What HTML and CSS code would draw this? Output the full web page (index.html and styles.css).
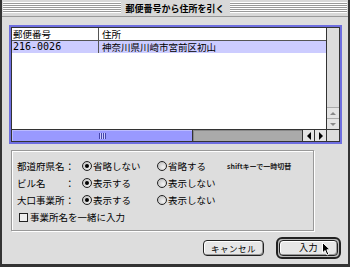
FILE: index.html
```html
<!DOCTYPE html>
<html lang="ja">
<head>
<meta charset="utf-8">
<link rel="stylesheet" href="styles.css">
</head>
<body>
<div class="window">
  <div class="titlebar">
    <div class="stripes"></div>
    <div class="title">郵便番号から住所を引く</div>
    <div class="stripes"></div>
  </div>
  <div class="body">
    <div class="list">
      <div class="list-inner">
        <div class="table">
          <div class="row head"><div class="c1">郵便番号</div><div class="c2">住所</div></div>
          <div class="row sel"><div class="c1 mono">216-0026</div><div class="c2">神奈川県川崎市宮前区初山</div></div>
        </div>
        <div class="vscroll">
          <div class="vtrack"></div>
          <div class="varrow"><span class="tri up"></span></div>
          <div class="varrow"><span class="tri down"></span></div>
        </div>
        <div class="hscroll">
          <div class="thumb"><span class="grip"></span></div>
          <div class="htrack"></div>
          <div class="harrow"><span class="tri left"></span></div>
          <div class="harrow"><span class="tri right"></span></div>
        </div>
        <div class="corner"></div>
      </div>
    </div>

    <div class="group">
      <div class="opt-row">
        <div class="lbl"><span class="name">都道府県名</span><span>：</span></div>
        <div class="opt"><span class="radio on"></span>省略しない</div>
        <div class="opt"><span class="radio"></span>省略する</div>
        <div class="note">shiftキーで一時切替</div>
      </div>
      <div class="opt-row">
        <div class="lbl"><span class="name">ビル名</span><span>：</span></div>
        <div class="opt"><span class="radio on"></span>表示する</div>
        <div class="opt"><span class="radio"></span>表示しない</div>
        <div></div>
      </div>
      <div class="opt-row">
        <div class="lbl"><span class="name">大口事業所</span><span>：</span></div>
        <div class="opt"><span class="radio on"></span>表示する</div>
        <div class="opt"><span class="radio"></span>表示しない</div>
        <div></div>
      </div>
      <div class="check-row"><span class="checkbox"></span>事業所名を一緒に入力</div>
    </div>

    <div class="buttons">
      <div class="btn">キャンセル</div>
      <div class="default-ring"><div class="btn btn-default">入力</div></div>
    </div>
  </div>
  <svg class="cursor" width="9" height="14" viewBox="0 0 9 14">
    <path d="M0.5 0.5 L0.5 11 L3 8.5 L5 13 L6.8 12.2 L4.9 7.8 L8.2 7.8 Z" fill="#000" stroke="#fff" stroke-width="1"/>
  </svg>
</div>
</body>
</html>
```

FILE: styles.css
```css
* { box-sizing: border-box; }
html, body { margin: 0; padding: 0; background: #dddddd; }
body {
  font-family: "Noto Sans CJK JP", "Noto Sans", sans-serif;
  font-size: 9.5px;
  color: #000;
}
.window {
  position: relative;
  width: 350px;
  height: 267px;
  background: #dddddd;
  border-left: 2px solid #333;
  border-right: 2px solid #333;
  border-bottom: 3px solid #333;
  display: flex;
  flex-direction: column;
}
.titlebar {
  height: 17px;
  flex: none;
  display: flex;
  align-items: center;
  padding: 0 1px 0 1px;
  border-bottom: 1px solid #999;
  background: #d8d8d8;
}
.stripes {
  flex: 1;
  height: 11px;
  margin-top: -1px;
  background: repeating-linear-gradient(to bottom, #fff 0 1px, #999 1px 2px);
}
.title {
  flex: none;
  padding: 0 5px;
  font-size: 9px;
  font-weight: bold;
  line-height: 15px;
}
.body {
  flex: 1;
  padding: 8px 7px 0 7px;
  display: flex;
  flex-direction: column;
}
.list {
  width: 333px;
  height: 119px;
  border: 2px solid #6e6ee0;
}
.list-inner {
  height: 100%;
  border: 1px solid #333;
  display: grid;
  grid-template-columns: 1fr 13px;
  grid-template-rows: 1fr 12px;
  background: #fff;
}
.table { background: #fff; }
.row {
  display: flex;
  height: 12px;
  line-height: 12px;
}
.row.head {
  height: 13px;
  border-bottom: 1px solid #555;
}
.row.sel { background: #ccccff; }
.c1 {
  width: 87px;
  padding-left: 1px;
  border-right: 1px solid #555;
}
.c2 { padding-left: 3px; }
.mono { font-family: "DejaVu Sans Mono", monospace; font-size: 10px; }
.vscroll {
  border-left: 1px solid #333;
  background: #dddddd;
  display: flex;
  flex-direction: column;
}
.vtrack { flex: 1; }
.varrow {
  height: 11px;
  border-top: 1px solid #aaa;
  display: flex;
  align-items: center;
  justify-content: center;
  background: #e4e4e4;
}
.hscroll {
  border-top: 1px solid #333;
  display: flex;
}
.thumb {
  width: 181px;
  background: #9999ff;
  border-right: 1px solid #333;
  display: flex;
  align-items: center;
  justify-content: center;
  box-shadow: inset 1px 1px 0 #bbbbff;
}
.grip {
  width: 7px;
  height: 6px;
  background: repeating-linear-gradient(to right, #4444aa 0 1px, #ccccff 1px 2px);
}
.htrack {
  flex: 1;
  background: #aaaaaa;
  box-shadow: inset 1px 1px 0 #888;
}
.harrow {
  width: 12px;
  border-left: 1px solid #333;
  background: #e4e4e4;
  display: flex;
  align-items: center;
  justify-content: center;
}
.corner {
  border-top: 1px solid #333;
  border-left: 1px solid #333;
  background: #dddddd;
}
.tri { width: 0; height: 0; display: block; }
.tri.up { border-left: 3px solid transparent; border-right: 3px solid transparent; border-bottom: 3px solid #888; }
.tri.down { border-left: 3px solid transparent; border-right: 3px solid transparent; border-top: 3px solid #888; }
.tri.left { border-top: 4px solid transparent; border-bottom: 4px solid transparent; border-right: 4px solid #000; }
.tri.right { border-top: 4px solid transparent; border-bottom: 4px solid transparent; border-left: 4px solid #000; }

.group {
  margin: 6px 0 0 2px;
  width: 303px;
  height: 81px;
  border: 1px solid #999;
  box-shadow: 1px 1px 0 #fff, inset 1px 1px 0 #fff;
  padding: 6px 0 0 5px;
}
.opt-row {
  display: grid;
  grid-template-columns: 65px 75px 70px auto;
  height: 17px;
  align-items: center;
}
.lbl { display: flex; }
.lbl .name { width: 48px; }
.opt { display: flex; align-items: center; }
.radio {
  width: 10px;
  height: 10px;
  margin-right: 1px;
  border-radius: 50%;
  border: 1px solid #222;
  background: radial-gradient(circle at 65% 65%, #f4f4f4 0, #c8c8c8 70%);
  position: relative;
  flex: none;
}
.radio.on::after {
  content: "";
  position: absolute;
  left: 2px;
  top: 2px;
  width: 4px;
  height: 4px;
  border-radius: 50%;
  background: #000;
}
.note {
  font-size: 7px;
  font-weight: bold;
  color: #222;
}
.check-row {
  height: 18px;
  display: flex;
  align-items: center;
  padding-left: 2px;
}
.checkbox {
  width: 9px;
  height: 9px;
  border: 1px solid #222;
  background: #eeeeee;
  margin-right: 2px;
  flex: none;
}
.buttons {
  margin-top: 6px;
  display: flex;
  justify-content: flex-end;
  align-items: center;
  gap: 12px;
}
.btn {
  width: 61px;
  height: 16px;
  border: 1px solid #222;
  border-radius: 4px;
  background: #e6e6e6;
  box-shadow: inset 1px 1px 0 #fff, inset -1px -1px 0 #999;
  font-size: 8.5px;
  letter-spacing: 0.5px;
  line-height: 14px;
  text-align: center;
}
.default-ring {
  width: 65px;
  height: 22px;
  border: 2px solid #222;
  border-radius: 6px;
  padding: 1px;
  background: #bbbbbb;
}
.btn-default {
  width: 59px;
  font-size: 9px;
}
.cursor {
  position: absolute;
  left: 320px;
  top: 242px;
}
```
